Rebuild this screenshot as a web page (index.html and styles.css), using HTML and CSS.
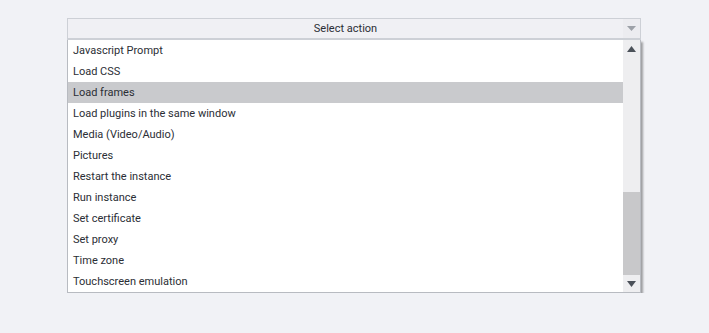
FILE: index.html
```html
<!DOCTYPE html>
<html lang="en">
<head>
    <meta charset="UTF-8">
    <title>Select action</title>
    <link rel="stylesheet" href="styles.css">
</head>
<body>
    <div class="combo">
        <div class="combo-head">
            <div class="combo-text">Select action</div>
            <div class="combo-btn">
                <svg width="9" height="5" viewBox="0 0 9 5"><path d="M0 0h9L4.5 5z" fill="#9da1a8"/></svg>
            </div>
        </div>
        <div class="combo-list">
            <ul class="items">
                <li>Javascript Prompt</li>
                <li>Load CSS</li>
                <li class="selected">Load frames</li>
                <li>Load plugins in the same window</li>
                <li>Media (Video/Audio)</li>
                <li>Pictures</li>
                <li>Restart the instance</li>
                <li>Run instance</li>
                <li>Set certificate</li>
                <li>Set proxy</li>
                <li>Time zone</li>
                <li>Touchscreen emulation</li>
            </ul>
            <div class="scrollbar">
                <div class="arrow">
                    <svg width="9" height="6" viewBox="0 0 9 6"><path d="M4.5 0L9 6H0z" fill="#4b5159"/></svg>
                </div>
                <div class="track">
                    <div class="thumb"></div>
                </div>
                <div class="arrow">
                    <svg width="9" height="6" viewBox="0 0 9 6"><path d="M0 0h9L4.5 6z" fill="#4b5159"/></svg>
                </div>
            </div>
        </div>
    </div>
</body>
</html>
```

FILE: styles.css
```css
body {
    margin: 0;
    padding: 18px 0 0 67px;
    background: #f1f2f6;
    font-family: Roboto, "Liberation Sans", sans-serif;
    font-size: 11px;
    color: #2b2e35;
}
.combo {
    width: 574px;
}
.combo-head {
    display: flex;
    height: 19px;
    border: 1px solid #cdd0d6;
    border-bottom: 2px solid #cdd0d6;
    background: #f0f0f4;
}
.combo-text {
    flex: 1;
    text-align: center;
    line-height: 19px;
}
.combo-btn {
    width: 17px;
    display: flex;
    align-items: center;
    justify-content: center;
    background: #ececf0;
}
.combo-list {
    display: flex;
    height: 252px;
    border: 1px solid #b8bbc1;
    border-top: none;
    background: #fff;
    box-shadow: 2px 2px 2px rgba(0, 0, 0, 0.35);
}
.items {
    flex: 1;
    margin: 0;
    padding: 0;
    list-style: none;
}
.items li {
    height: 21px;
    line-height: 21px;
    padding-left: 5px;
}
.items li.selected {
    background: #c9cacd;
}
.scrollbar {
    width: 17px;
    display: flex;
    flex-direction: column;
    background: #eeeef0;
}
.arrow {
    height: 17px;
    display: flex;
    align-items: center;
    justify-content: center;
}
.track {
    flex: 1;
    display: flex;
    flex-direction: column;
    justify-content: flex-end;
}
.thumb {
    height: 83px;
    background: #c8c8ca;
}
```
